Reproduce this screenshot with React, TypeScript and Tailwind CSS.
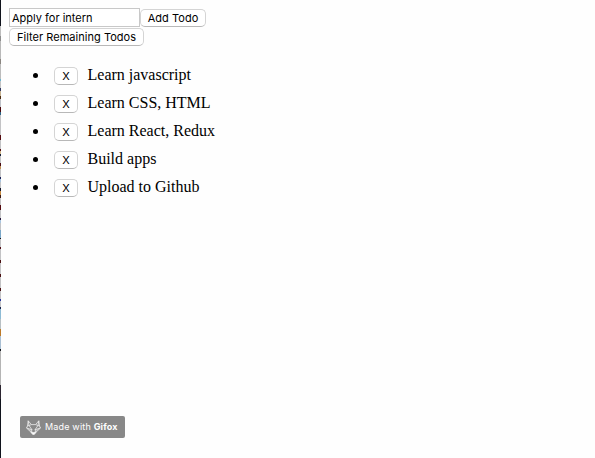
import React from 'react';

const initialTodos = ['Learn javascript', 'Learn CSS, HTML', 'Learn React, Redux', 'Build apps', 'Upload to Github'];

const buttonStyle =
  "flex items-center justify-center rounded-[5px] border border-[#d4d4d4] border-b-[#b8b8b8] bg-white font-['Inter',sans-serif] text-[11px] leading-none tracking-[0.03px] text-black whitespace-nowrap";

// Slivers of the window visible behind the left edge: [height, colour class]
const edge: [number, string][] = [
  [26, 'bg-[#10131c]'], [10, 'bg-[#bdbdbd]'], [5, 'bg-[#8c8c8c]'], [18, 'bg-[#b9b9b9]'],
  [5, 'bg-[#8a8580]'], [15, 'bg-[#bcbcbc]'], [2, 'bg-[#69b3d0]'], [7, 'bg-[#c4c4c4]'],
  [3, 'bg-[#303860]'], [5, 'bg-[#c4b190]'], [3, 'bg-[#4a2b10]'], [8, 'bg-[#bfc2c8]'],
  [5, 'bg-[#4a080c]'], [3, 'bg-[#2e6484]'], [20, 'bg-[#c3c3c5]'], [5, 'bg-[#550b10]'],
  [9, 'bg-[#c3c3c5]'], [2, 'bg-[#551014]'], [3, 'bg-[#d3b98a]'], [2, 'bg-[#182038]'],
  [7, 'bg-[#c3c3c5]'], [3, 'bg-[#480a10]'], [3, 'bg-[#c09258]'], [8, 'bg-[#c3c3c5]'],
  [2, 'bg-[#1b2258]'], [3, 'bg-[#a8c4df]'], [6, 'bg-[#c3c3c5]'], [3, 'bg-[#14182c]'],
  [4, 'bg-[#c48a42]'], [3, 'bg-[#3c1810]'], [7, 'bg-[#c3c3c5]'], [5, 'bg-[#550b10]'],
  [8, 'bg-[#c3c3c5]'], [2, 'bg-[#24183c]'], [3, 'bg-[#a8c4df]'], [7, 'bg-[#c3c3c5]'],
  [8, 'bg-[#7aa7c8]'], [1, 'bg-[#14161c]'], [8, 'bg-[#c3c3c5]'], [2, 'bg-[#500c14]'],
  [11, 'bg-[#c3c3c5]'], [3, 'bg-[#4a1012]'],
  [11, 'bg-[#c3c3c5]'], [3, 'bg-[#4a1012]'], [11, 'bg-[#c3c3c5]'], [3, 'bg-[#4a1012]'],
  [8, 'bg-[#c3c3c5]'], [2, 'bg-[#2434a0]'], [6, 'bg-[#c3c3c5]'], [2, 'bg-[#16234c]'],
  [10, 'bg-[#8dbbd5]'], [10, 'bg-[#b8c0c4]'], [7, 'bg-[#bd7a28]'], [13, 'bg-[#aac0d4]'],
  [2, 'bg-[#14161c]'], [34, 'bg-[#b4b4b4]'], [14, 'bg-[#2b2430]'], [58, 'bg-[#10131c]'],
];

function WindowEdge() {
  return (
    <div className="flex h-[458px] w-px shrink-0 flex-col overflow-hidden">
      {edge.map(([height, color], i) => (
        <div key={i} className={`shrink-0 ${color}`} style={{ height }} />
      ))}
      <div className="flex-1 bg-[#10131c]" />
    </div>
  );
}

function FoxLogo() {
  return (
    <svg className="h-[15px] w-[15px] shrink-0" viewBox="0 0 15 15" fill="none" stroke="#f0f0f0" strokeWidth=".75" strokeLinejoin="round">
      <path d="M2.2.8 5.4 4.6h4.2L12.8.8l.7 5.2 1 2-4.5 4.2-1.6 2H6.6L5 12.2.5 8l1-2Z" />
      <path d="M2.2.8 3 5.5l2.4-.9M12.8.8 12 5.5l-2.4-.9M1.5 6 3 5.5l3 4.2M13.5 6 12 5.5l-3 4.2M.5 8 6 9.7 5 12.2M14.5 8 9 9.7l1 2.5" />
      <path d="M5 11.8 7.5 12.5l2.5-.7-1.6 2.4H6.6Z" fill="#fff" />
      <path d="m.8 8 4.8 1.8-.8 2ZM14.2 8 9.4 9.8l.8 2Z" fill="#fff" fillOpacity=".35" stroke="none" />
    </svg>
  );
}

export default function App() {
  const [todos, setTodos] = React.useState(initialTodos);
  const [text, setText] = React.useState('Apply for intern');
  return (
    <div className="flex h-[458px] w-[595px] overflow-hidden bg-[#fefefe]">
      <WindowEdge />
      <main className="flex flex-1 flex-col items-start pt-2 pl-2">
        <div className="flex h-5 items-start">
          <input
            className="h-[19px] w-[131px] border border-[#c8c8c8] bg-white px-[2px] font-['Inter',sans-serif] text-[11px] leading-none tracking-[0px] text-black outline-none"
            value={text}
            onChange={(e) => setText(e.target.value)}
          />
          <button className={`${buttonStyle} mt-px h-[18px] w-[66px]`} onClick={() => setTodos([...todos, text])}>
            Add Todo
          </button>
        </div>
        <button className={`${buttonStyle} h-[18px] w-[135px]`}>Filter Remaining Todos</button>
        <ul className="mt-[15px] flex flex-col pl-6">
          {todos.map((todo, i) => (
            <li key={i} className="flex h-7 items-center">
              <span className="mt-px size-[5px] rounded-full bg-black" />
              <button
                className={`${buttonStyle} mt-[2px] ml-4 h-[18px] w-6`}
                onClick={() => setTodos(todos.filter((_, n) => n !== i))}
              >
                X
              </button>
              <span className="ml-[9.5px] font-['Liberation_Serif',serif] text-[16px] leading-5 text-black">{todo}</span>
            </li>
          ))}
        </ul>
        <div className="mt-auto mb-5 ml-[11px] flex h-[22px] w-[105px] items-center rounded-[2px] bg-[#888] pl-[6px] font-['Inter',sans-serif] text-[9px] leading-none tracking-[0.18px] whitespace-nowrap text-white">
          <FoxLogo />
          <span className="mb-px ml-1">Made with <b>Gifox</b></span>
        </div>
      </main>
    </div>
  );
}
